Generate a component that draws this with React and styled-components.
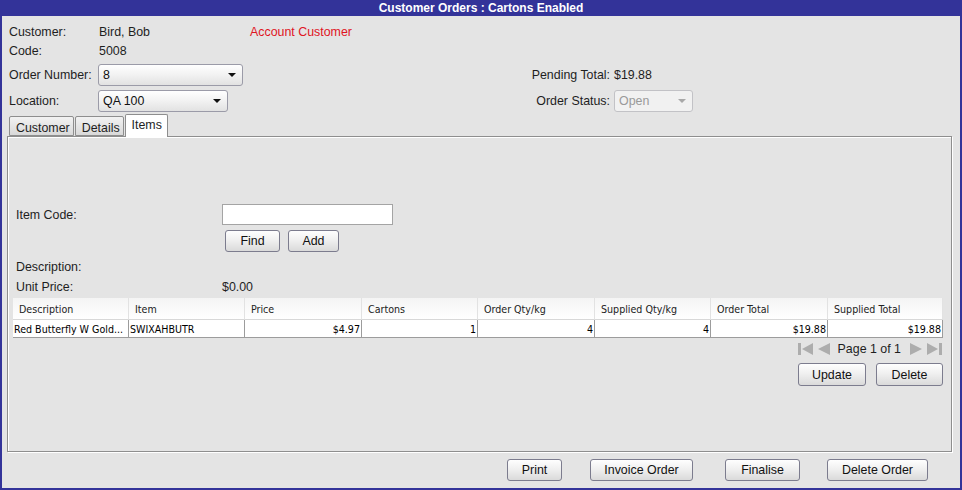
import React from 'react';
import styled, { createGlobalStyle } from 'styled-components';

const Global = createGlobalStyle`
  html, body { margin: 0; padding: 0; background: #e4e4e4; }
  body { font-family: "Liberation Sans", Arial, sans-serif; }
  * { box-sizing: border-box; }
`;

const Window = styled.div`
  width: 962px;
  height: 490px;
  background: #333399;
  padding: 0 2px 2px 2px;
  display: flex;
  flex-direction: column;
`;

const TitleBar = styled.div`
  height: 16px;
  color: #fff;
  font-weight: bold;
  font-size: 12px;
  line-height: 16px;
  text-align: center;
`;

const Body = styled.div`
  flex: 1;
  background: #e4e4e4;
  display: flex;
  flex-direction: column;
  padding: 7px 8px 0 5px;
  font-size: 12.4px;
  color: #1e1e1e;
`;

const HeaderGrid = styled.div`
  margin-left: 2px;
  display: grid;
  width: 700px;
  grid-template-columns: 89px 152px 280px 84px 95px;
  grid-template-rows: 18px 20px 27px 25px;
  align-items: center;
`;

const Value = styled.div`
  padding-left: ${(p) => (p.$red ? 0 : 1)}px;
  color: ${(p) => (p.$red ? '#e0151f' : '#1e1e1e')};
  grid-column: ${(p) => p.$col || 'auto'};
`;

const RightLabel = styled.div`
  grid-column: 4;
  justify-self: end;
  padding-right: 4px;
  white-space: nowrap;
`;

const Combo = styled.div`
  width: ${(p) => p.$w}px;
  height: 22px;
  border: 1px solid ${(p) => (p.$disabled ? '#c2c2c6' : '#9b9ba8')};
  border-radius: 3px;
  background: ${(p) =>
    p.$disabled ? '#f1f1f1' : 'linear-gradient(#ffffff, #f3f3f3 45%, #e2e2e2)'};
  display: flex;
  align-items: center;
  justify-content: space-between;
  padding: 0 5px 0 4px;
  color: ${(p) => (p.$disabled ? '#9a9a9a' : '#111')};
`;

const Arrow = styled.span`
  width: 0;
  height: 0;
  border-left: 4px solid transparent;
  border-right: 4px solid transparent;
  border-top: 4px solid ${(p) => (p.$disabled ? '#a8a8a8' : '#111')};
  margin-right: 1px;
`;

const TabStrip = styled.div`
  display: flex;
  align-items: flex-end;
  margin: 1px 0 0 2px;
  height: 22px;
  position: relative;
  z-index: 2;
`;

const Tab = styled.div`
  height: ${(p) => (p.$active ? '23px' : '20px')};
  margin-right: ${(p) => (p.$active ? '0' : '1px')};
  margin-bottom: ${(p) => (p.$active ? '-1px' : '0')};
  padding: ${(p) => (p.$active ? '4px 5px 0 6px' : '5px 3px 0 6px')};
  border: 1px solid #8e8e8e;
  border-bottom: ${(p) => (p.$active ? 'none' : '1px solid #8e8e8e')};
  border-radius: 2px 2px 0 0;
  background: ${(p) => (p.$active ? '#ffffff' : 'linear-gradient(#f2f2f2, #d9d9d9)')};
  font-size: 12.4px;
  line-height: 13px;
  color: #1e1e1e;
`;

const Panel = styled.div`
  height: 316px;
  border: 1px solid #8e8e8e;
  box-shadow: 1px 1px 0 #ffffff, inset 1px 1px 0 #ffffff;
  padding: 67px 8px 0 5px;
  display: flex;
  flex-direction: column;
`;

const FormRow = styled.div`
  display: grid;
  grid-template-columns: 209px auto;
  align-items: center;
  height: ${(p) => p.$h || 20}px;
  margin-top: ${(p) => p.$mt || 0}px;
`;

const FormLabel = styled.div`
  padding-left: 3px;
`;

const TextInput = styled.div`
  width: 171px;
  height: 21px;
  background: #fff;
  border: 1px solid #a4a4a4;
`;

const ButtonRow = styled.div`
  display: flex;
  gap: ${(p) => p.$gap || 8}px;
  justify-content: ${(p) => p.$justify || 'flex-start'};
  padding-left: ${(p) => p.$pl || 0}px;
  margin-top: ${(p) => p.$mt || 0}px;
`;

const Button = styled.div`
  width: ${(p) => p.$w}px;
  height: ${(p) => p.$h || 22}px;
  margin-left: ${(p) => p.$ml || 0}px;
  border: 1px solid #7c7c8e;
  border-radius: 3px;
  background: linear-gradient(#fefefe, #f0f0f0 45%, #dadada);
  display: flex;
  align-items: center;
  justify-content: center;
  font-size: 12.4px;
  color: #111;
`;

const Table = styled.div`
  width: 930px;
  margin-top: 2px;
  font-family: "DejaVu Sans Condensed", "DejaVu Sans", sans-serif;
  font-stretch: condensed;
  font-size: 10.6px;
`;

const TRow = styled.div`
  display: grid;
  grid-template-columns: 116px 116px 117px 116px 117px 116px 117px 115px;
  height: ${(p) => (p.$head ? 22 : 18)}px;
`;

const HeadCell = styled.div`
  background: linear-gradient(#f4f4f4, #ffffff);
  border-right: 1px solid #e2e2e2;
  border-bottom: 1px solid #d8d8d8;
  display: flex;
  align-items: center;
  padding-left: 6px;
  color: #222;
`;

const Cell = styled.div`
  background: #fff;
  border-right: 1px solid #9c9c9c;
  border-bottom: 1px solid #9c9c9c;
  display: flex;
  align-items: center;
  justify-content: ${(p) => (p.$right ? 'flex-end' : 'flex-start')};
  padding: ${(p) => (p.$right ? '0 1px 0 0' : '0 0 0 1px')};
  white-space: nowrap;
  overflow: hidden;
  color: #000;
`;

const Pager = styled.div`
  width: 930px;
  display: flex;
  justify-content: flex-end;
  align-items: center;
  gap: 2px;
  height: 20px;
  margin-top: 1px;
  color: #1e1e1e;
`;

const PageText = styled.span`
  margin: 0 6px 0 5px;
`;

const Footer = styled.div`
  display: flex;
  justify-content: flex-end;
  padding: 7px 24px 0 0;
`;

const PagerIcon = ({ kind }) => {
  const c = '#adadad';
  if (kind === 'first')
    return (
      <svg width="16" height="14" viewBox="0 0 16 14">
        <rect x="0" y="1" width="3" height="12" fill={c} />
        <polygon points="15,1 15,13 4,7" fill={c} />
      </svg>
    );
  if (kind === 'prev')
    return (
      <svg width="15" height="14" viewBox="0 0 15 14">
        <polygon points="14,1 14,13 2,7" fill={c} />
      </svg>
    );
  if (kind === 'next')
    return (
      <svg width="15" height="14" viewBox="0 0 15 14">
        <polygon points="1,1 1,13 13,7" fill={c} />
      </svg>
    );
  return (
    <svg width="17" height="14" viewBox="0 0 17 14">
      <polygon points="1,1 1,13 12,7" fill={c} />
      <rect x="13" y="1" width="3" height="12" fill={c} />
    </svg>
  );
};

const headers = [
  'Description',
  'Item',
  'Price',
  'Cartons',
  'Order Qty/kg',
  'Supplied Qty/kg',
  'Order Total',
  'Supplied Total',
];

const row = [
  ['Red Butterfly W Gold...', false],
  ['SWIXAHBUTR', false],
  ['$4.97', true],
  ['1', true],
  ['4', true],
  ['4', true],
  ['$19.88', true],
  ['$19.88', true],
];

export default function App() {
  return (
    <>
      <Global />
      <Window>
        <TitleBar>Customer Orders : Cartons Enabled</TitleBar>
        <Body>
          <HeaderGrid>
            <div>Customer:</div>
            <Value>Bird, Bob</Value>
            <Value $red>Account Customer</Value>
            <div />
            <div />

            <div>Code:</div>
            <Value $col="2 / 6">5008</Value>

            <div>Order Number:</div>
            <Combo $w={145}>
              <span>8</span>
              <Arrow />
            </Combo>
            <div />
            <RightLabel>Pending Total:</RightLabel>
            <div>$19.88</div>

            <div>Location:</div>
            <Combo $w={130}>
              <span>QA 100</span>
              <Arrow />
            </Combo>
            <div />
            <RightLabel>Order Status:</RightLabel>
            <Combo $w={79} $disabled>
              <span>Open</span>
              <Arrow $disabled />
            </Combo>
          </HeaderGrid>

          <TabStrip>
            <Tab>Customer</Tab>
            <Tab>Details</Tab>
            <Tab $active>Items</Tab>
          </TabStrip>

          <Panel>
            <FormRow $h={21}>
              <FormLabel>Item Code:</FormLabel>
              <TextInput />
            </FormRow>
            <ButtonRow $pl={212} $mt={5}>
              <Button $w={55}>Find</Button>
              <Button $w={51}>Add</Button>
            </ButtonRow>
            <FormRow $h={18} $mt={6}>
              <FormLabel>Description:</FormLabel>
            </FormRow>
            <FormRow $h={18} $mt={2}>
              <FormLabel>Unit Price:</FormLabel>
              <div>$0.00</div>
            </FormRow>
            <Table>
              <TRow $head>
                {headers.map((h) => (
                  <HeadCell key={h}>{h}</HeadCell>
                ))}
              </TRow>
              <TRow>
                {row.map(([t, r], i) => (
                  <Cell key={i} $right={r}>
                    {t}
                  </Cell>
                ))}
              </TRow>
            </Table>
            <Pager>
              <PagerIcon kind="first" />
              <PagerIcon kind="prev" />
              <PageText>Page 1 of 1</PageText>
              <PagerIcon kind="next" />
              <PagerIcon kind="last" />
            </Pager>
            <ButtonRow $justify="flex-end" $gap={10} $mt={4}>
              <Button $w={68} $h={23}>Update</Button>
              <Button $w={67} $h={23}>Delete</Button>
            </ButtonRow>
          </Panel>

          <Footer>
            <Button $w={55}>Print</Button>
            <Button $w={103} $ml={28}>Invoice Order</Button>
            <Button $w={75} $ml={32}>Finalise</Button>
            <Button $w={101} $ml={27}>Delete Order</Button>
          </Footer>
        </Body>
      </Window>
    </>
  );
}
